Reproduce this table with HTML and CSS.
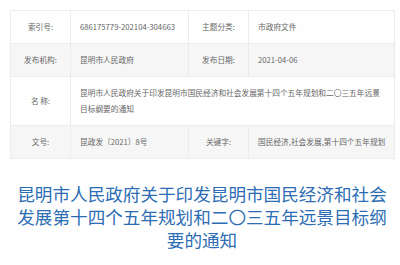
FILE: index.html
```html
<!DOCTYPE html>
<html lang="zh">
<head>
<meta charset="utf-8">
<link rel="stylesheet" href="styles.css">
</head>
<body>
<div class="wrap">
  <table class="info">
    <colgroup>
      <col class="c1"><col class="c2"><col class="c3"><col class="c4">
    </colgroup>
    <tr>
      <td class="lab">索引号:</td>
      <td class="val">686175779-202104-304663</td>
      <td class="lab">主题分类:</td>
      <td class="val">市政府文件</td>
    </tr>
    <tr class="alt">
      <td class="lab">发布机构:</td>
      <td class="val">昆明市人民政府</td>
      <td class="lab">发布日期:</td>
      <td class="val">2021-04-06</td>
    </tr>
    <tr>
      <td class="lab">名 称:</td>
      <td class="val name" colspan="3">昆明市人民政府关于印发昆明市国民经济和社会发展第十四个五年规划和二〇三五年远景目标纲要的通知</td>
    </tr>
    <tr class="alt">
      <td class="lab">文号:</td>
      <td class="val">昆政发〔2021〕8号</td>
      <td class="lab">关键字:</td>
      <td class="val">国民经济,社会发展,第十四个五年规划</td>
    </tr>
  </table>
  <h1 class="title">昆明市人民政府关于印发昆明市国民经济和社会发展第十四个五年规划和二〇三五年远景目标纲要的通知</h1>
</div>
</body>
</html>
```

FILE: styles.css
```css
html, body {
  margin: 0;
  padding: 0;
  background: #fff;
}
.wrap {
  padding: 10px 6px 0 10px;
  font-family: "Noto Sans CJK SC", "Noto Sans", sans-serif;
}
.info {
  width: 384px;
  border-collapse: collapse;
  table-layout: fixed;
  font-size: 7.7px;
  color: #666;
}
.c1 { width: 60px; }
.c2 { width: 118px; }
.c3 { width: 60px; }
.c4 { width: 146px; }
.info td {
  border: 1px solid #ececec;
  line-height: 16px;
  padding: 8px 0 8px 9px;
  vertical-align: middle;
  white-space: nowrap;
}
.info td.name {
  padding-right: 12px;
  white-space: normal;
}
.info td.lab {
  text-align: center;
  padding-left: 0;
}
.info tr.alt td {
  background: #f6f6f6;
}
.title {
  margin: 23px 0 0 0;
  font-size: 17.6px;
  line-height: 23px;
  font-weight: normal;
  color: #2c6db3;
  text-align: center;
}
```
